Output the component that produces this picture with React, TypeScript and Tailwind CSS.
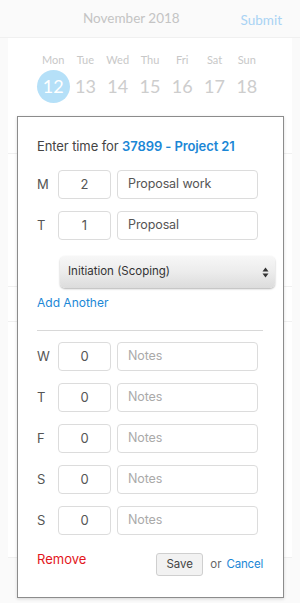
import React from "react";

const days = [
  ["Mon", "12"],
  ["Tue", "13"],
  ["Wed", "14"],
  ["Thu", "15"],
  ["Fri", "16"],
  ["Sat", "17"],
  ["Sun", "18"],
];

function Row({ label, hours, note, top }: { label: string; hours: string; note?: string; top: string }) {
  return (
    <div className={`flex items-center ${top}`}>
      <div className="w-[21px] text-[13px] text-[#555]">{label}</div>
      <div className="w-[53px] h-[29px] border border-[#dcdcdc] rounded-[4px] flex items-center justify-center text-[13px] text-[#555]">
        {hours}
      </div>
      <div
        className={`ml-[6px] w-[141px] h-[29px] border border-[#dcdcdc] rounded-[4px] flex items-center pl-[10px] text-[12.5px] tracking-[-0.1px] ${
          note ? "text-[#555]" : "text-[#aaa]"
        }`}
      >
        {note ?? "Notes"}
      </div>
    </div>
  );
}

export default function App() {
  return (
    <div
      className="relative w-[300px] h-[603px] bg-[#fafafa] overflow-hidden"
      style={{ fontFamily: "Lato, 'Open Sans', sans-serif" }}
    >
      {/* background header */}
      <div className="relative h-[38px] border-b border-[#f0f0f0] flex items-center pl-[83px]">
        <span className="text-[13.5px] text-[#c4c4c4]">November 2018</span>
        <span className="absolute right-[18px] top-[10px] text-[13.5px] text-[#a9d3f4]">Submit</span>
      </div>
      {/* background card */}
      <div className="mx-[8px] bg-white">
        <div className="h-[116px] border-b border-[#f0f0f0] pt-[14px]">
          <div className="grid grid-cols-7 w-[226px] mx-auto">
            {days.map(([d, n], i) => (
              <div key={d} className="flex flex-col items-center">
                <div className="text-[11px] text-[#c8c8c8] h-[16px] leading-[16px]">{d}</div>
                <div
                  className={`mt-[2px] w-[33px] h-[33px] rounded-full flex items-center justify-center text-[18px] ${
                    i === 0 ? "bg-[#b5e0f8] text-white" : "text-[#cdcdcd]"
                  }`}
                >
                  {n}
                </div>
              </div>
            ))}
          </div>
        </div>
        <div className="h-[133px] border-b border-[#f0f0f0]" />
        <div className="h-[35px] border-b border-[#f0f0f0]" />
        <div className="h-[236px] border-b border-[#f0f0f0]" />
      </div>

      {/* popup */}
      <div
        className="absolute left-[17px] top-[116px] w-[267px] h-[482px] bg-white border border-[#8c8c8c] shadow-[0_1px_3px_rgba(0,0,0,0.15)] pl-[19px]"
        style={{ fontFamily: "Inter, 'Open Sans', sans-serif" }}
      >
        <div className="mt-[20px] text-[13px] tracking-[-0.1px] text-[#444] leading-[18px]">
          Enter time for <span className="font-semibold text-[#1b87d6]">37899 - Project 21</span>
        </div>
        <Row label="M" hours="2" note="Proposal work" top="mt-[15px]" />
        <Row label="T" hours="1" note="Proposal" top="mt-[12px]" />
        <div className="ml-[23px] mt-[16px] w-[215px] h-[32px] rounded-[5px] bg-gradient-to-b from-[#f7f7f7] via-[#ececec] to-[#dcdcdc] shadow-[0_1px_2px_rgba(0,0,0,0.3)] flex items-center pl-[8px] pr-[6px]">
          <span className="flex-1 text-[11.5px] text-[#333]">Initiation (Scoping)</span>
          <svg width="7" height="11" viewBox="0 0 7 11">
            <path d="M3.5 0.5 L6.5 4.5 L0.5 4.5 Z" fill="#333" />
            <path d="M3.5 10.5 L6.5 6.5 L0.5 6.5 Z" fill="#333" />
          </svg>
        </div>
        <div className="mt-[6px] text-[12px] text-[#1b87d6] leading-[18px]">Add Another</div>
        <div className="mt-[18px] w-[226px] h-px bg-[#d8d8d8]" />
        <Row label="W" hours="0" top="mt-[11px]" />
        <Row label="T" hours="0" top="mt-[12px]" />
        <Row label="F" hours="0" top="mt-[12px]" />
        <Row label="S" hours="0" top="mt-[12px]" />
        <Row label="S" hours="0" top="mt-[12px]" />
        <div className="mt-[10px] flex items-start w-[226px]">
          <span className="text-[13px] text-[#e3161c] leading-[18px] mt-[5px]">Remove</span>
          <div className="ml-auto flex items-center mt-[8px]">
            <div className="w-[47px] h-[23px] border border-[#cfcfcf] rounded-[3px] bg-[#f2f2f2] flex items-center justify-center text-[11.5px] text-[#444]">
              Save
            </div>
            <span className="ml-[7px] text-[11.5px] text-[#666]">or</span>
            <span className="ml-[5px] text-[11.5px] tracking-[-0.2px] text-[#1b87d6]">Cancel</span>
          </div>
        </div>
      </div>
    </div>
  );
}
